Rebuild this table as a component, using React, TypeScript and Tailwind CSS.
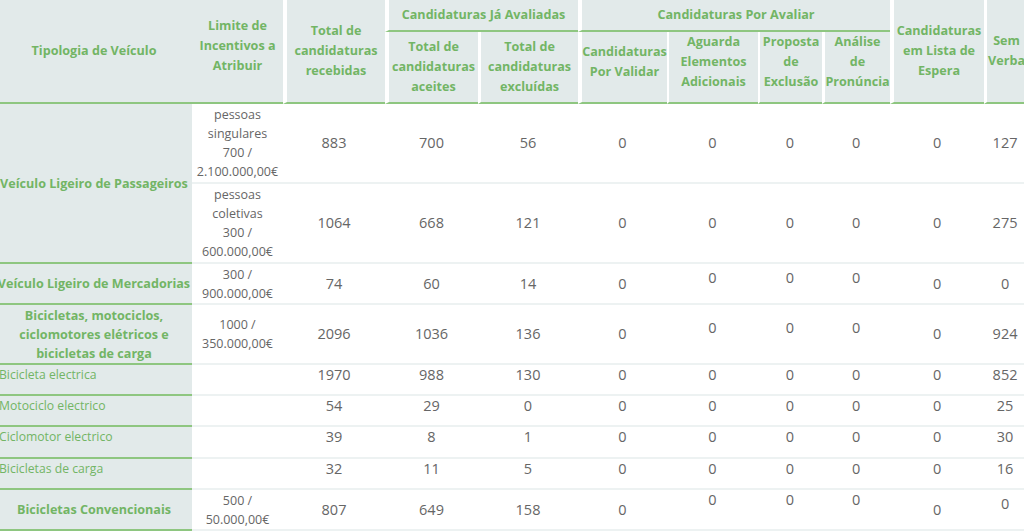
const green = "text-[#72b565]";

type Row = {
  label?: string;
  labelBold?: boolean;
  labelSpan?: number;
  limit: string[];
  values: number[];
  height: string;
  top?: boolean;
  shift?: string;
  lastShift?: string;
};

const rows: Row[] = [
  {
    label: "Veículo Ligeiro de Passageiros",
    labelBold: true,
    labelSpan: 2,
    limit: ["pessoas", "singulares", "700 /", "2.100.000,00€"],
    values: [883, 700, 56, 0, 0, 0, 0, 0, 127],
    height: "h-[80px]",
  },
  {
    limit: ["pessoas", "coletivas", "300 /", "600.000,00€"],
    values: [1064, 668, 121, 0, 0, 0, 0, 0, 275],
    height: "h-[80px]",
  },
  {
    label: "Veículo Ligeiro de Mercadorias",
    labelBold: true,
    limit: ["300 /", "900.000,00€"],
    values: [74, 60, 14, 0, 0, 0, 0, 0, 0],
    height: "h-[41px]",
    shift: "align-top pt-[4px]",
  },
  {
    label: "Bicicletas, motociclos, ciclomotores elétricos e bicicletas de carga",
    labelBold: true,
    limit: ["1000 /", "350.000,00€"],
    values: [2096, 1036, 136, 0, 0, 0, 0, 0, 924],
    height: "h-[60px]",
    shift: "align-top pt-[13px]",
  },
  { label: "Bicicleta electrica", limit: [], values: [1970, 988, 130, 0, 0, 0, 0, 0, 852], height: "h-[31px]", top: true },
  { label: "Motociclo electrico", limit: [], values: [54, 29, 0, 0, 0, 0, 0, 0, 25], height: "h-[31px]", top: true },
  { label: "Ciclomotor electrico", limit: [], values: [39, 8, 1, 0, 0, 0, 0, 0, 30], height: "h-[32px]", top: true },
  { label: "Bicicletas de carga", limit: [], values: [32, 11, 5, 0, 0, 0, 0, 0, 16], height: "h-[31px]", top: true },
  {
    label: "Bicicletas Convencionais",
    labelBold: true,
    limit: ["500 /", "50.000,00€"],
    values: [807, 649, 158, 0, 0, 0, 0, 0, 0],
    height: "h-[41px]",
    shift: "align-top pt-0",
    lastShift: "align-top pt-[4px]",
  },
];

const th = `bg-[#e2eaea] ${green} font-bold text-[12.6px] leading-[20px] text-center align-middle p-0 border-b-2 border-b-[#8ec680] border-l-white`;

export default function App() {
  return (
    <div className="w-[1024px] h-[531px] overflow-hidden bg-white font-['Open_Sans',sans-serif]">
      <table className="-ml-[4px] w-[1030px] table-fixed border-separate border-spacing-0">
        <colgroup>
          <col className="w-[196px]" />
          <col className="w-[91px]" />
          <col className="w-[102px]" />
          <col className="w-[93px]" />
          <col className="w-[100px]" />
          <col className="w-[89px]" />
          <col className="w-[91px]" />
          <col className="w-[64px]" />
          <col className="w-[68px]" />
          <col className="w-[94px]" />
          <col className="w-[42px]" />
        </colgroup>
        <thead>
          <tr>
            <th rowSpan={2} className={th}>Tipologia de Veículo</th>
            <th rowSpan={2} className={`${th} pb-[10px]`}>
              Limite de Incentivos a Atribuir
            </th>
            <th rowSpan={2} className={`${th} border-l-4`}>
              Total de candidaturas recebidas
            </th>
            <th colSpan={2} className={`${th} border-l-4 h-[32px]`}>
              Candidaturas Já Avaliadas
            </th>
            <th colSpan={4} className={`${th} border-l-4 h-[32px]`}>
              Candidaturas Por Avaliar
            </th>
            <th rowSpan={2} className={`${th} border-l-4`}>
              Candidaturas em Lista de Espera
            </th>
            <th rowSpan={2} className={`${th} border-l-[3px]`}>
              Sem Verba
            </th>
          </tr>
          <tr>
            <th className={`${th} border-l-4 h-[69px]`}>Total de candidaturas aceites</th>
            <th className={`${th} border-l-[3px]`}>Total de candidaturas excluídas</th>
            <th className={`${th} border-l-4 pb-[10px]`}>Candidaturas Por Validar</th>
            <th className={`${th} border-l-2 pb-[10px]`}>Aguarda Elementos Adicionais</th>
            <th className={`${th} border-l-2 pb-[10px]`}>Proposta de Exclusão</th>
            <th className={`${th} border-l-[3px] pb-[10px]`}>
              Análise
              <br />
              de
              <br />
              Pronúncia
            </th>
          </tr>
        </thead>
        <tbody>
          {rows.map((r, i) => {
            const cell = `p-0 text-center text-[#666] border-b-2 border-b-[#edf2f2] ${
              r.top ? "align-top" : "align-middle"
            } ${r.height}`;
            return (
              <tr key={i}>
                {r.label && (
                  <td
                    rowSpan={r.labelSpan ?? 1}
                    className={`bg-[#e2eaea] ${green} border-b-2 border-b-[#8ec680] p-0 ${
                      r.labelBold
                        ? "text-[12.6px] leading-[19px] font-bold text-center align-middle"
                        : "text-[12.2px] leading-[20px] text-left pl-[3px] align-top"
                    }`}
                  >
                    {r.label}
                  </td>
                )}
                <td className={cell}>
                  {r.limit.map((l, j) => (
                    <div key={j} className="text-[12.5px] leading-[19px]">
                      {l}
                    </div>
                  ))}
                </td>
                {r.values.map((v, j) => {
                  let extra = "";
                  if (r.shift && j >= 4 && j <= 6) extra = r.shift;
                  if (r.lastShift && j === 8) extra = r.lastShift;
                  return (
                    <td key={j} className={`${cell} text-[14.5px] leading-[20px] ${extra}`}>
                      {v}
                    </td>
                  );
                })}
              </tr>
            );
          })}
        </tbody>
      </table>
    </div>
  );
}
